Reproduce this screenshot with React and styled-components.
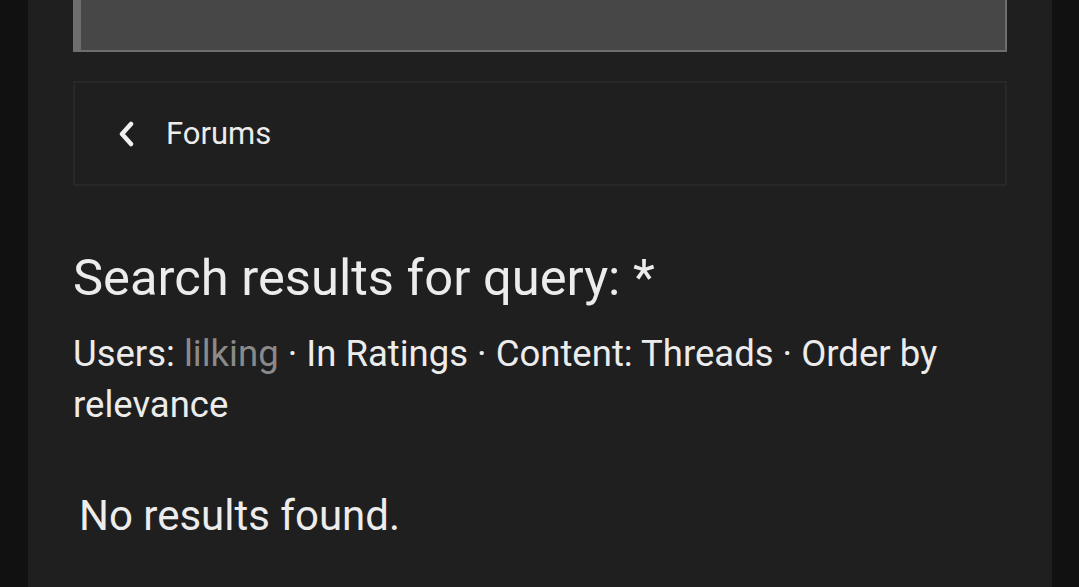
import React from 'react'
import styled, { createGlobalStyle } from 'styled-components'

const GlobalStyle = createGlobalStyle`
  html, body {
    margin: 0;
    padding: 0;
    background: #111111;
  }
  body {
    font-family: Roboto, "Noto Sans", Arial, sans-serif;
    color: #ececec;
    overflow: hidden;
  }
`;

const Page = styled.div`
  min-height: 587px;
  background: #111111;
  padding: 0 27px 0 28px;
`;

const Panel = styled.main`
  background: #1f1f1f;
  min-height: 587px;
  padding: 0 45px;
`;

// grey notice box cut off at the top of the screen
const Notice = styled.div`
  height: 52px;
  box-sizing: border-box;
  background: #474747;
  border-left: 8px solid #6e6e6e;
  border-right: 2px solid #6e6e6e;
  border-bottom: 2px solid #6e6e6e;
`;

const Breadcrumb = styled.nav`
  margin-top: 29px;
  height: 105px;
  box-sizing: border-box;
  border: 2px solid #282828;
  display: flex;
  align-items: center;
  padding-left: 42px;
  gap: 31px;
`;

const CrumbLink = styled.a`
  color: #ececec;
  font-size: 31px;
  text-decoration: none;
`;

const Heading = styled.h1`
  margin: 62px 0 0;
  font-size: 50.7px;
  font-weight: 400;
  line-height: 60px;
  color: #ececec;
`;

const Meta = styled.div`
  margin-top: 20px;
  font-size: 36.5px;
  line-height: 51px;
  color: #ececec;
`;

const UserName = styled.span`
  color: #8a8a8a;
`;

const Empty = styled.p`
  margin: 61px 0 0 6px;
  font-size: 42px;
  line-height: 50px;
`;

const Chevron = () => (
  <svg width="18" height="26" viewBox="0 0 18 26" fill="none">
    <path d="M14 3 L5 13 L14 23" stroke="#f0f0f0" strokeWidth="4.5" strokeLinecap="round" strokeLinejoin="round" />
  </svg>
)

export default function App() {
  return (
    <>
      <GlobalStyle />
      <Page>
        <Panel>
          <Notice />
          <Breadcrumb>
            <Chevron />
            <CrumbLink href="#">Forums</CrumbLink>
          </Breadcrumb>
          <Heading>Search results for query: *</Heading>
          <Meta>
            Users: <UserName>lilking</UserName> · In Ratings · Content: Threads · Order by relevance
          </Meta>
          <Empty>No results found.</Empty>
        </Panel>
      </Page>
    </>
  )
}
